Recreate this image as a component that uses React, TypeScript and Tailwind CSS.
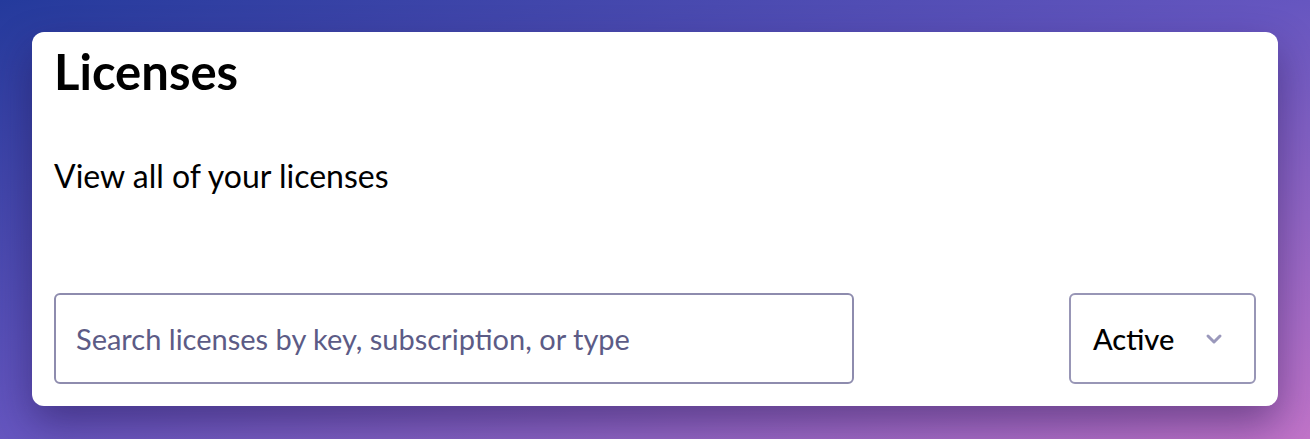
import { ChevronDown } from "lucide-react";

const App: React.FC = () => {
  return (
    <div className="w-[1310px] h-[439px] p-8 bg-linear-to-br from-[#243a9c] via-[#6656c0] to-[#c274c9] font-['Lato',sans-serif]">
      <div className="h-[374px] rounded-xl bg-white px-[22px] shadow-[0_18px_40px_rgba(30,15,70,0.45)] flex flex-col">
        {/* Header */}
        <h1 className="mt-[11px] text-[49px] leading-[56px] font-bold text-black">Licenses</h1>
        <p className="mt-[59px] text-[32px] leading-[36px] text-black">View all of your licenses</p>

        {/* Filters */}
        <div className="mt-auto mb-[22px] flex items-center justify-between">
          <input
            type="text"
            placeholder="Search licenses by key, subscription, or type"
            className="w-[800px] h-[91px] rounded-md border-2 border-[#8e8cae] px-5 text-[29px] text-black placeholder:text-[#5c5b86] outline-none"
          />
          <button className="w-[187px] h-[91px] rounded-md border-2 border-[#9896b6] pl-[22px] pr-7 flex items-center justify-between text-[29px] font-medium text-black">
            <span>Active</span>
            <ChevronDown className="h-6 w-6 text-[#9a98bb]" strokeWidth={3} />
          </button>
        </div>
      </div>
    </div>
  );
};

export default App;
